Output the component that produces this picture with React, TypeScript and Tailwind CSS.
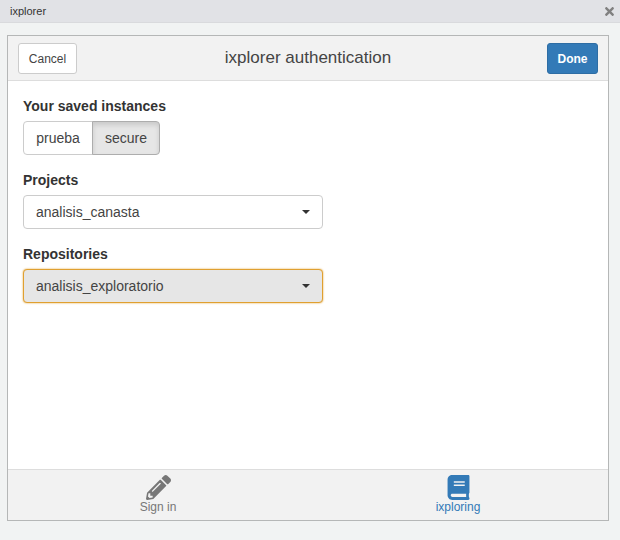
import React from "react";
import { FaBook, FaPencilAlt, FaTimes } from "react-icons/fa";

function Caret() {
  return <span className="w-0 h-0 border-x-[4px] border-x-transparent border-t-[4px] border-t-[#333]" />;
}

function Picker({ label, value, focused }: { label: string; value: string; focused?: boolean }) {
  return (
    <div className="mb-[15px]">
      <label className="block font-bold text-[14px] leading-[20px] mb-[5px] text-[#333]">{label}</label>
      <div
        className={
          focused
            ? "w-[300px] h-[34px] flex items-center justify-between pl-[12px] pr-[12px] rounded-[4px] border border-[#e0a030] shadow-[0_0_2px_#e0a030] bg-[#e6e6e6] text-[14px] text-[#444]"
            : "w-[300px] h-[34px] flex items-center justify-between pl-[12px] pr-[12px] rounded-[4px] border border-[#ccc] bg-white text-[14px] text-[#444]"
        }
      >
        <span>{value}</span>
        <Caret />
      </div>
    </div>
  );
}

export default function App() {
  return (
    <div className="w-[620px] h-[540px] flex flex-col bg-[#f1f3f3] font-['Liberation_Sans',Arial,sans-serif] text-[#333]">
      {/* window title */}
      <div className="h-[23px] flex items-center justify-between pl-[10px] pr-[4px] bg-[#e1e2e6] border-b border-[#d9dadd]">
        <span className="text-[11px] text-[#333]">ixplorer</span>
        <FaTimes className="w-[13px] h-[13px] text-[#808080]" />
      </div>

      <div className="mt-[12px] mx-[7px] w-[602px] h-[486px] flex flex-col border border-[#b5b7b7] bg-white">
        {/* gadget title */}
        <div className="h-[45px] grid grid-cols-[59px_1fr_59px] items-center px-[10px] bg-[#f2f2f2] border-b border-[#ddd]">
          <button className="h-[31px] w-[59px] pt-px rounded-[3px] border border-[#ccc] bg-white text-[12px] text-[#444]">Cancel</button>
          <h1 className="text-center text-[17px] text-[#444]">ixplorer authentication</h1>
          <button className="justify-self-end h-[31px] w-[51px] pt-px rounded-[3px] border border-[#2e6da4] bg-[#337ab7] text-[12px] font-bold text-white">Done</button>
        </div>

        {/* content */}
        <div className="flex-1 px-[15px] pt-[15px]">
          <div className="mb-[15px]">
            <label className="block font-bold text-[14px] leading-[20px] mb-[5px] text-[#333]">Your saved instances</label>
            <div className="flex text-[14px] text-[#444]">
              <span className="h-[34px] w-[70px] flex items-center justify-center rounded-l-[4px] border border-[#ccc] bg-white">prueba</span>
              <span className="h-[34px] w-[68px] -ml-px flex items-center justify-center rounded-r-[4px] border border-[#adadad] bg-[#e6e6e6] shadow-[inset_0_3px_5px_rgba(0,0,0,0.125)]">secure</span>
            </div>
          </div>
          <Picker label="Projects" value="analisis_canasta" />
          <Picker label="Repositories" value="analisis_exploratorio" focused />
        </div>

        {/* tabs */}
        <div className="h-[51px] flex bg-[#f2f2f2] border-t border-[#ddd]">
          <div className="flex-1 flex flex-col items-center pt-[5px] text-[#777]">
            <FaPencilAlt className="w-[25px] h-[25px]" />
            <span className="text-[12px] leading-[14px]">Sign in</span>
          </div>
          <div className="flex-1 flex flex-col items-center pt-[5px] text-[#337ab7]">
            <FaBook className="w-[25px] h-[25px]" />
            <span className="text-[12px] leading-[14px]">ixploring</span>
          </div>
        </div>
      </div>
    </div>
  );
}
